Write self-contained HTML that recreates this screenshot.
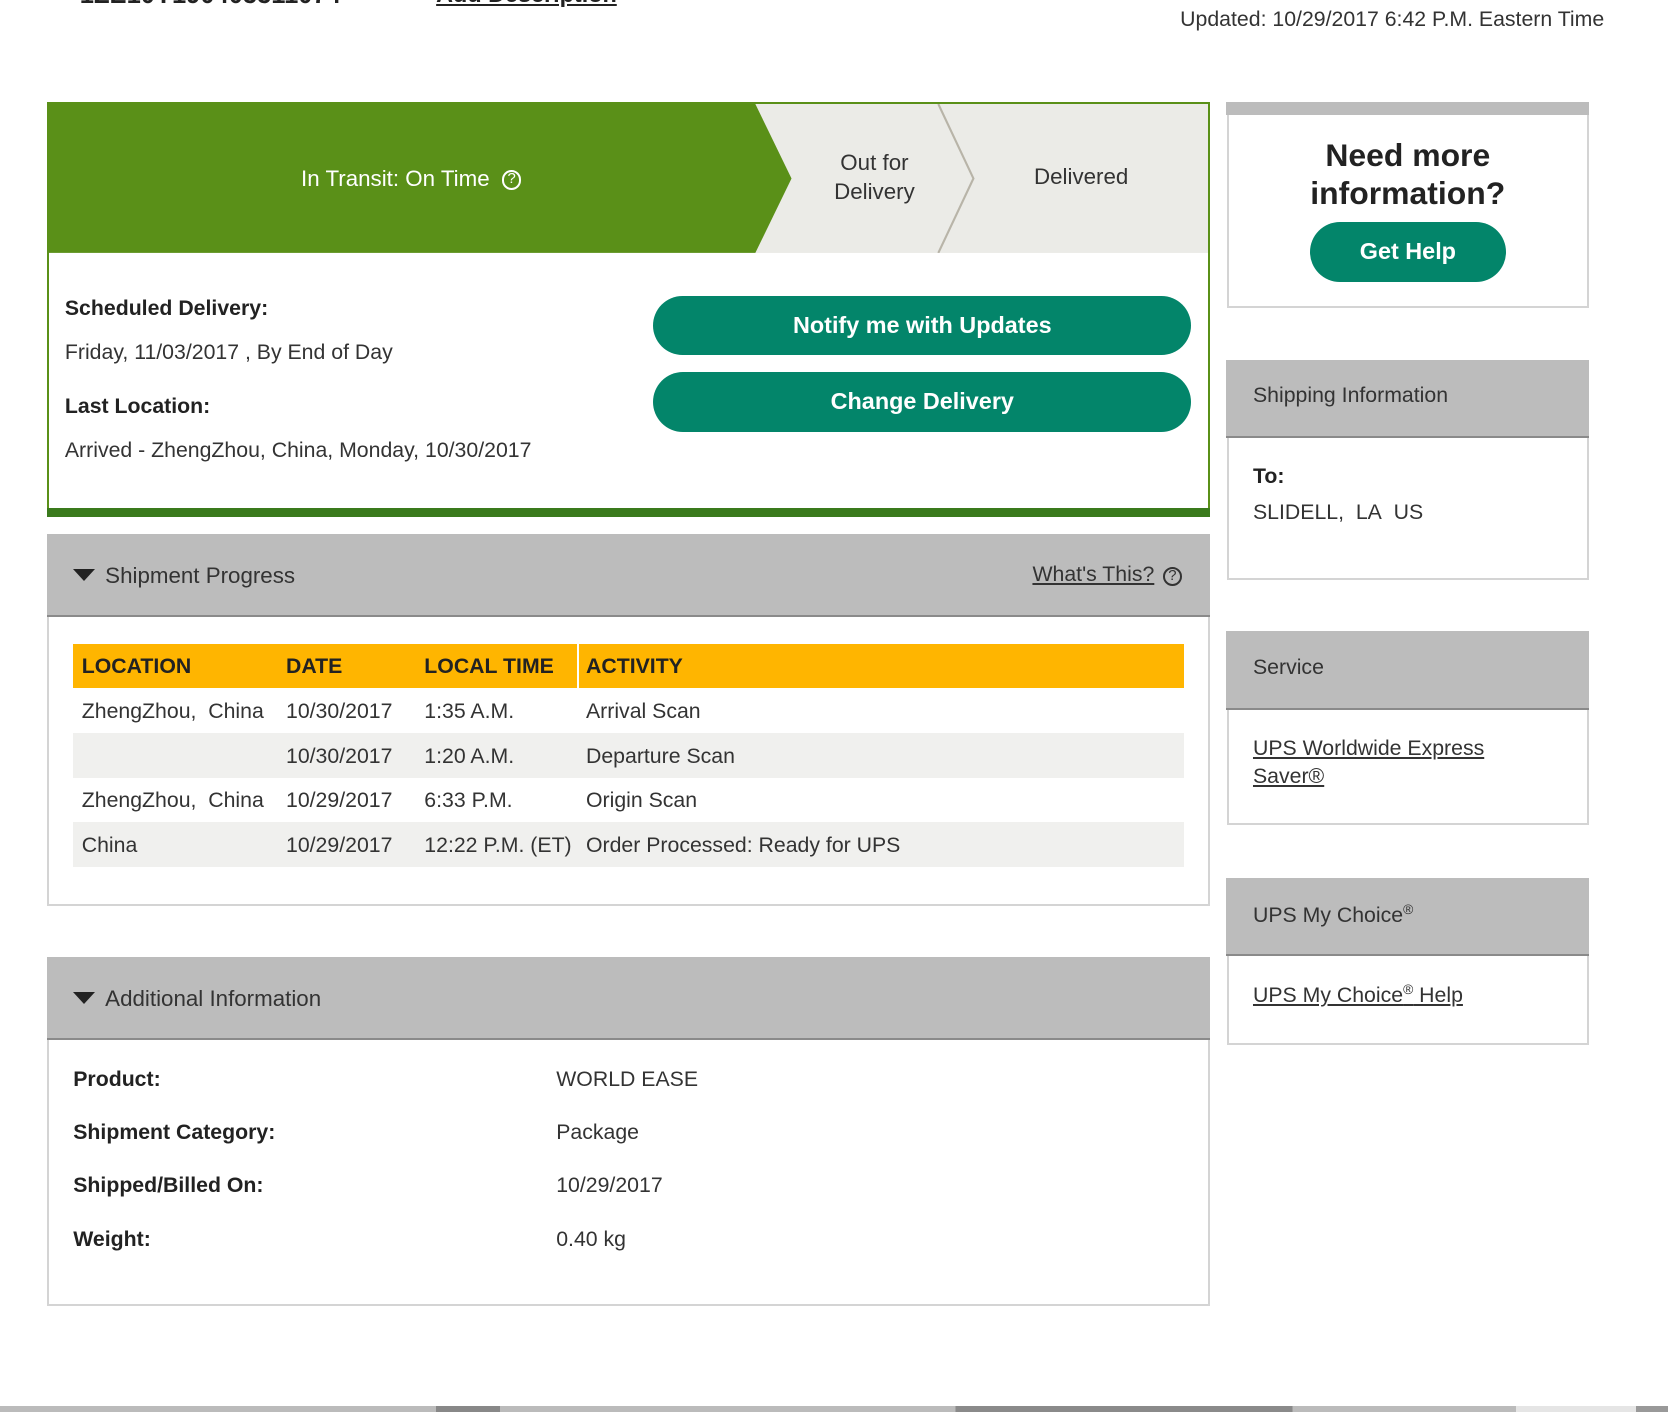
<!DOCTYPE html>
<html><head><meta charset="utf-8"><style>
html,body{margin:0;padding:0;background:#fff;overflow:hidden}
body{width:1668px;height:1412px}
#w{zoom:1.06378;position:relative;width:1568px;height:1327px;font-family:"Liberation Sans",sans-serif;color:#333;font-size:20px}
.a{position:absolute;white-space:nowrap}
.b{font-weight:bold;color:#222}
.btn{position:absolute;background:#03856a;color:#fff;font-weight:bold;font-size:22px;text-align:center;border-radius:30px}
.panel{position:absolute;border:2px solid #d4d4d4;border-top:none;box-sizing:border-box;background:#fff}
.hd{position:absolute;left:-2px;right:-2px;top:0;background:#bcbcbc;border-bottom:2px solid #8a8a8a;box-sizing:border-box}
u{text-decoration:underline}
.tri{position:absolute;width:0;height:0;border-left:11px solid transparent;border-right:11px solid transparent;border-top:12px solid #222}
.q{display:inline-block;width:18px;height:18px;border:2px solid currentColor;border-radius:50%;font-size:14px;line-height:18px;text-align:center;vertical-align:middle;box-sizing:border-box;line-height:15px}
</style></head><body><div id="w">
<div class="a b" style="left:75px;top:-18px;font-size:24px">1ZE10Y190405511074</div>
<div class="a b" style="left:410px;top:-18px;font-size:22px"><u>Add Description</u></div>
<div class="a" style="right:60px;top:7px;font-size:20px">Updated: 10/29/2017 6:42 P.M. Eastern Time</div>

<!-- status box -->
<div style="position:absolute;left:44px;top:96px;width:1093px;height:390px;border:2px solid #5a9018;border-bottom:none;box-sizing:border-box"></div>
<div style="position:absolute;left:44px;top:478px;width:1093px;height:8px;background:#3a7a1c"></div>
<svg class="a" style="left:46px;top:98px" width="1090" height="140">
<rect width="1090" height="140" fill="#ebebe7"/>
<polygon points="0,0 664,0 698,70 664,140 0,140" fill="#5a9018"/>
<polyline points="836,0 869,70 836,140" fill="none" stroke="#b8b4a8" stroke-width="2"/>
</svg>
<div class="a" style="left:283px;top:156px;color:#fff;font-size:21px">In Transit: On Time &nbsp;<span class="q">?</span></div>
<div class="a" style="left:760px;top:140px;width:124px;text-align:center;font-size:21px;line-height:27px">Out for<br>Delivery</div>
<div class="a" style="left:972px;top:154px;font-size:21px">Delivered</div>
<div class="a b" style="left:61px;top:278px">Scheduled Delivery:</div>
<div class="a" style="left:61px;top:320px">Friday, 11/03/2017 , By End of Day</div>
<div class="a b" style="left:61px;top:370px">Last Location:</div>
<div class="a" style="left:61px;top:412px">Arrived - ZhengZhou, China, Monday, 10/30/2017</div>
<div class="btn" style="left:614px;top:278px;width:506px;height:56px;line-height:56px">Notify me with Updates</div>
<div class="btn" style="left:614px;top:350px;width:506px;height:56px;line-height:56px">Change Delivery</div>

<!-- shipment progress -->
<div class="panel" style="left:44px;top:502px;width:1093px;height:350px">
<div class="hd" style="height:78px"></div>
<div class="tri" style="left:23px;top:33px"></div>
<div class="a" style="left:53px;top:27px;font-size:21px">Shipment Progress</div>
<div class="a" style="right:50px;top:26px"><u>What's This?</u></div>
<div class="a" style="right:24px;top:27px"><span class="q" style="color:#333">?</span></div>
<div style="position:absolute;left:23px;top:103px;width:1044px">
<div style="height:42px;background:#ffb500;position:relative;font-weight:bold;color:#222">
<span class="a" style="left:8px;top:10px">LOCATION</span><span class="a" style="left:200px;top:10px">DATE</span><span class="a" style="left:330px;top:10px">LOCAL TIME</span><span class="a" style="left:482px;top:10px">ACTIVITY</span><div style="position:absolute;left:474px;top:0;width:1px;height:42px;background:#fff"></div></div>
<div style="height:42px;position:relative"><span class="a" style="left:8px;top:10px">ZhengZhou,&nbsp; China</span><span class="a" style="left:200px;top:10px">10/30/2017</span><span class="a" style="left:330px;top:10px">1:35 A.M.</span><span class="a" style="left:482px;top:10px">Arrival Scan</span></div>
<div style="height:42px;position:relative;background:#f0f0ee"><span class="a" style="left:200px;top:10px">10/30/2017</span><span class="a" style="left:330px;top:10px">1:20 A.M.</span><span class="a" style="left:482px;top:10px">Departure Scan</span></div>
<div style="height:42px;position:relative"><span class="a" style="left:8px;top:10px">ZhengZhou,&nbsp; China</span><span class="a" style="left:200px;top:10px">10/29/2017</span><span class="a" style="left:330px;top:10px">6:33 P.M.</span><span class="a" style="left:482px;top:10px">Origin Scan</span></div>
<div style="height:42px;position:relative;background:#f0f0ee"><span class="a" style="left:8px;top:10px">China</span><span class="a" style="left:200px;top:10px">10/29/2017</span><span class="a" style="left:330px;top:10px">12:22 P.M. (ET)</span><span class="a" style="left:482px;top:10px">Order Processed: Ready for UPS</span></div>
</div>
</div>

<!-- additional info -->
<div class="panel" style="left:44px;top:900px;width:1093px;height:328px">
<div class="hd" style="height:78px"></div>
<div class="tri" style="left:23px;top:33px"></div>
<div class="a" style="left:53px;top:27px;font-size:21px">Additional Information</div>
<div class="a b" style="left:23px;top:103px">Product:</div><div class="a" style="left:477px;top:103px">WORLD EASE</div>
<div class="a b" style="left:23px;top:153px">Shipment Category:</div><div class="a" style="left:477px;top:153px">Package</div>
<div class="a b" style="left:23px;top:203px">Shipped/Billed On:</div><div class="a" style="left:477px;top:203px">10/29/2017</div>
<div class="a b" style="left:23px;top:253px">Weight:</div><div class="a" style="left:477px;top:253px">0.40 kg</div>
</div>

<!-- right column -->
<div class="panel" style="left:1153px;top:96px;width:341px;height:194px">
<div class="hd" style="height:12px;border:none"></div>
<div class="a b" style="left:0;width:337px;top:32px;text-align:center;font-size:30px;line-height:36px;white-space:normal">Need more<br>information?</div>
</div>
<div class="btn" style="left:1231px;top:209px;width:185px;height:56px;line-height:56px">Get Help</div>

<div class="panel" style="left:1153px;top:338px;width:341px;height:207px">
<div class="hd" style="height:74px"></div>
<div class="a" style="left:23px;top:22px">Shipping Information</div>
<div class="a b" style="left:23px;top:98px">To:</div>
<div class="a" style="left:23px;top:132px">SLIDELL,&nbsp; LA&nbsp; US</div>
</div>
<div class="panel" style="left:1153px;top:593px;width:341px;height:183px">
<div class="hd" style="height:74px"></div>
<div class="a" style="left:23px;top:23px">Service</div>
<div class="a" style="left:23px;top:98px;line-height:26px"><u>UPS Worldwide Express</u><br><u>Saver®</u></div>
</div>
<div class="panel" style="left:1153px;top:825px;width:341px;height:157px">
<div class="hd" style="height:74px"></div>
<div class="a" style="left:23px;top:22px">UPS My Choice<sup style="font-size:13px">®</sup></div>
<div class="a" style="left:23px;top:97px"><u>UPS My Choice<sup style="font-size:13px">®</sup> Help</u></div>
</div>

<div style="position:absolute;left:0;top:1322px;width:1568px;height:5px;background:linear-gradient(90deg,#bbb 0,#bbb 410px,#888 410px,#888 470px,#bbb 470px,#bbb 898px,#8a8a8a 898px,#8a8a8a 1215px,#bbb 1215px,#bbb 1425px,#e5e5e5 1425px,#e5e5e5 1538px,#999 1538px)"></div>
</div></body></html>
